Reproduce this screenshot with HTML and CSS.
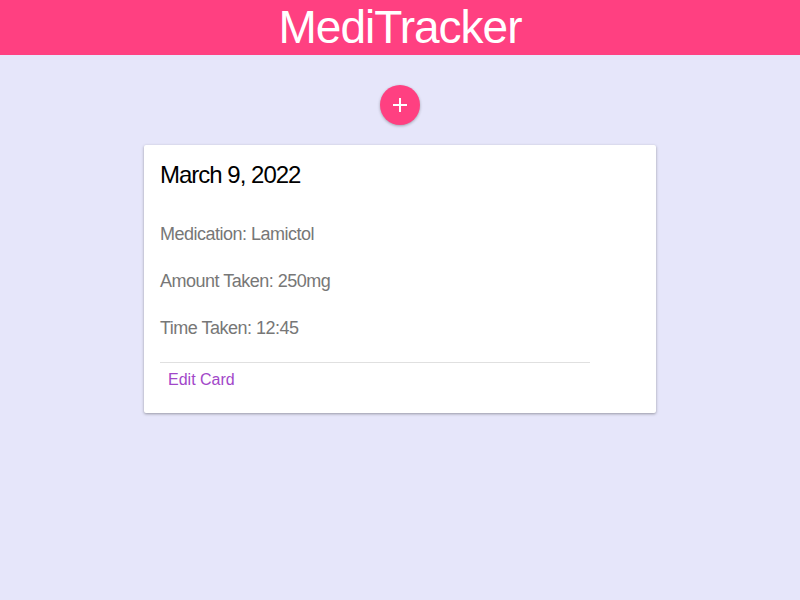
FILE: index.html
```html
<!DOCTYPE html>
<html>
<head>
<meta charset="utf-8">
<link rel="stylesheet" href="styles.css">
</head>
<body>
<header class="topbar"><h1 class="brand">MediTracker</h1></header>
<main class="content">
  <button class="fab" aria-label="Add">
    <svg width="16" height="16" viewBox="0 0 16 16"><path d="M8 1v14M1 8h14" stroke="#fff" stroke-width="2"/></svg>
  </button>
  <section class="card">
    <h2 class="card-title">March 9, 2022</h2>
    <p class="line">Medication: Lamictol</p>
    <p class="line">Amount Taken: 250mg</p>
    <p class="line">Time Taken: 12:45</p>
    <div class="actions"><a class="edit">Edit Card</a></div>
  </section>
</main>
</body>
</html>
```
FILE: styles.css
```css
html, body { margin: 0; padding: 0; }
body {
  background: #e6e6fa;
  font-family: "Liberation Sans", Arial, sans-serif;
  min-height: 600px;
}
.topbar {
  background: #ff4081;
  height: 55px;
  display: flex;
  align-items: center;
  justify-content: center;
}
.brand {
  margin: 0;
  color: #fff;
  font-weight: 400;
  font-size: 46px;
  letter-spacing: -1px;
  line-height: 55px;
}
.content {
  display: flex;
  flex-direction: column;
  align-items: center;
  padding-top: 30px;
}
.fab {
  width: 40px;
  height: 40px;
  border-radius: 50%;
  border: none;
  background: #ff4081;
  box-shadow: 0 1px 3px rgba(0,0,0,0.3);
  display: flex;
  align-items: center;
  justify-content: center;
  padding: 0;
}
.card {
  margin-top: 20px;
  width: 512px;
  box-sizing: border-box;
  background: #fff;
  border-radius: 2px;
  box-shadow: 0 1px 3px rgba(0,0,0,0.35);
  padding: 16px 16px 24px;
}
.card-title {
  margin: 0;
  font-size: 24px;
  font-weight: 400;
  color: #000;
  line-height: 28px;
  letter-spacing: -1px;
}
.line {
  margin: 0;
  font-size: 18px;
  line-height: 21px;
  color: #777777;
  letter-spacing: -0.5px;
}
.card-title + .line { margin-top: 35px; }
.line + .line { margin-top: 26px; }
.actions {
  margin-top: 23px;
  width: 430px;
  box-sizing: border-box;
  border-top: 1px solid #e0e0e0;
  padding: 8px 8px 0;
}
.edit {
  color: #a247c9;
  font-size: 16px;
  line-height: 18px;
}
```
